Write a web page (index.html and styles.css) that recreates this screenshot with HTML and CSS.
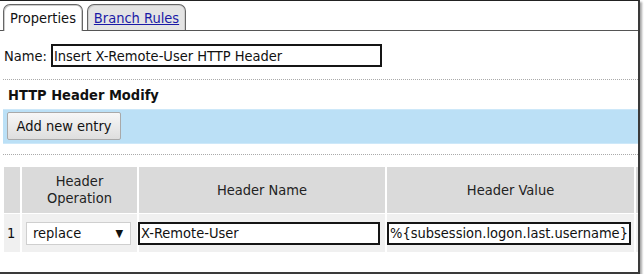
FILE: index.html
```html
<!DOCTYPE html>
<html lang="en">
<head>
    <meta charset="UTF-8">
    <title>HTTP Header Modify</title>
    <link rel="stylesheet" href="styles.css">
</head>
<body>
    <div class="frame">
        <div class="tabs">
            <div class="tab active">Properties</div>
            <div class="tab"><a href="#">Branch Rules</a></div>
        </div>
        <div class="content">
            <div class="name-row">
                <label for="nameField">Name:</label>
                <input type="text" id="nameField" class="text-box name-box" value="Insert X-Remote-User HTTP Header">
            </div>
            <div class="divider"></div>
            <h2>HTTP Header Modify</h2>
            <div class="toolbar">
                <button type="button">Add new entry</button>
            </div>
            <div class="divider second"></div>
            <table class="entries">
                <colgroup>
                    <col class="c-num">
                    <col class="c-op">
                    <col class="c-name">
                    <col class="c-value">
                    <col class="c-extra">
                </colgroup>
                <thead>
                    <tr>
                        <th></th>
                        <th>Header<br>Operation</th>
                        <th>Header Name</th>
                        <th>Header Value</th>
                        <th></th>
                    </tr>
                </thead>
                <tbody>
                    <tr>
                        <td class="num">1</td>
                        <td class="op">
                            <span class="select-wrap">
                                <select>
                                    <option>replace</option>
                                    <option>insert</option>
                                    <option>remove</option>
                                </select>
                            </span>
                        </td>
                        <td class="field"><input type="text" class="text-box cell-box" value="X-Remote-User"></td>
                        <td class="field"><input type="text" class="text-box value-box" value="%{subsession.logon.last.username}"></td>
                        <td></td>
                    </tr>
                </tbody>
            </table>
        </div>
    </div>
</body>
</html>
```

FILE: styles.css
```css
body {
    margin: 0;
    padding: 0;
    background: #fff;
    font-family: "DejaVu Sans Condensed", "DejaVu Sans", sans-serif;
    font-size: 14.5px;
    color: #111;
}
.frame {
    width: 638px;
    height: 271px;
    border-top: 1px solid #222;
    border-right: 2px solid #3a3a3a;
    border-bottom: 2px solid #3a3a3a;
    box-shadow: 2px 2px 2px rgba(0,0,0,0.35);
    overflow: hidden;
}
.tabs {
    display: flex;
    gap: 4px;
    height: 26px;
    padding: 3px 0 0 3px;
    border-bottom: 1px solid #555;
}
.tab {
    box-sizing: border-box;
    height: 26px;
    line-height: 26px;
    text-align: center;
    border: 1px solid #666;
    border-bottom: none;
    border-radius: 7px 7px 0 0;
    box-shadow: inset 1px 1px 0 #ccc, inset -1px 0 0 #ccc;
    background: #e4e4e4;
    width: 99px;
}
.tab.active {
    width: 80px;
    height: 27px;
    background: #fff;
    margin-bottom: -1px;
}
.tab a {
    color: #1a1aa6;
    text-decoration: underline;
}
.content {
    padding-left: 3px;
}
.name-row {
    display: flex;
    align-items: center;
    gap: 4px;
    margin-top: 13px;
    padding-left: 1px;
}
.text-box {
    box-sizing: border-box;
    height: 23px;
    border: 2px solid #151515;
    padding: 0 1px;
    font-family: inherit;
    font-size: 14.5px;
    color: #111;
    background: #fff;
}
.name-box {
    width: 331px;
}
.divider {
    margin-top: 12px;
    border-top: 1px dotted #aaa;
}
.divider.second {
    margin-top: 10px;
}
h2 {
    margin: 5px 0 4px 5px;
    font-size: 14.5px;
    line-height: 20px;
    font-weight: bold;
}
.toolbar {
    box-sizing: content-box;
    height: 31px;
    padding: 2px 4px 0;
    background: #bbe0f6;
    border-top: 1px solid #cde8f9;
    border-bottom: 1px solid #cde8f9;
}
button {
    width: 114px;
    height: 28px;
    font-family: inherit;
    font-size: 14.5px;
    color: #111;
    background: linear-gradient(#f7f7f7, #dedede);
    border: 1px solid #a9a9a9;
    border-radius: 2px;
    padding: 0;
}
.entries {
    margin: 11px 0 0 -1px;
    table-layout: fixed;
    width: 656px;
    border-collapse: separate;
    border-spacing: 2px 1px;
}
.c-num { width: 16px; }
.c-op { width: 115px; }
.c-name { width: 246px; }
.c-value { width: 247px; }
.c-extra { width: 20px; }
th {
    height: 46px;
    padding: 0;
    background: #dadada;
    font-weight: normal;
    line-height: 17px;
    color: #222;
}
td {
    height: 38px;
    padding: 0;
    background: #f0f0f0;
}
td.num {
    padding-left: 3px;
}
td.op {
    padding-left: 4px;
}
.select-wrap {
    position: relative;
    display: inline-block;
}
.select-wrap::after {
    content: "\25BC";
    position: absolute;
    right: 8px;
    top: 5px;
    font-size: 11px;
    color: #111;
    pointer-events: none;
}
select {
    appearance: none;
    -webkit-appearance: none;
    width: 105px;
    height: 23px;
    border: 1px solid #cfcfcf;
    background: #fff;
    font-family: inherit;
    font-size: 14.5px;
    color: #111;
    padding: 0 0 0 6px;
    border-radius: 0;
}
td.field input {
    display: block;
}
.cell-box {
    width: 242px;
    margin-left: -1px;
}
.value-box {
    width: 244px;
}
```
